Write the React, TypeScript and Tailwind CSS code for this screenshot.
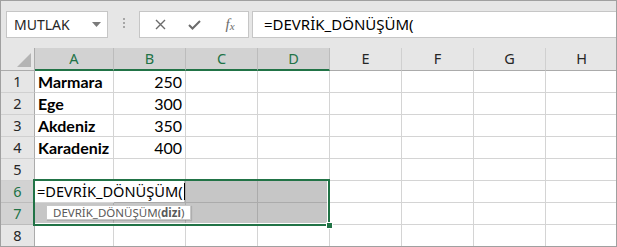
const ui = "font-['Noto_Sans','Open_Sans',sans-serif]";
const cellFont = "font-['Lato','Liberation_Sans',sans-serif]";

const cols = ['A', 'B', 'C', 'D', 'E', 'F', 'G', 'H'];
const widths = ['w-[79px]', 'w-[72px]', 'w-[72px]', 'w-[72px]', 'w-[72px]', 'w-[72px]', 'w-[72px]', 'w-[72px]'];

const data: Record<number, [string, string]> = {
  1: ['Marmara', '250'],
  2: ['Ege', '300'],
  3: ['Akdeniz', '350'],
  4: ['Karadeniz', '400'],
};

function HeaderRow() {
  return (
    <div className="flex h-[23px] shrink-0">
      <div className="relative w-[34px] shrink-0 border-r border-b border-[#ababab] bg-[#e6e6e6]">
        <svg className="absolute right-[3px] bottom-[3px]" width="14" height="14" viewBox="0 0 14 14">
          <polygon points="14,0 14,14 0,14" fill="#b4b4b4" />
        </svg>
      </div>
      {cols.map((c, i) => {
        const sel = i < 4;
        return (
          <div
            key={c}
            className={`${widths[i]} shrink-0 flex items-center justify-center text-[14.5px] ${
              sel
                ? 'bg-[#d2d2d2] text-[#217346] border-b-2 border-b-[#217346] border-r border-r-[#bcbcbc]'
                : 'bg-[#e6e6e6] text-[#262626] border-b border-b-[#ababab] border-r border-r-[#d0d0d0]'
            } ${i === 3 ? 'border-r-[#ababab]' : ''}`}
          >
            {c}
          </div>
        );
      })}
    </div>
  );
}

function Row({ n }: { n: number }) {
  const selRow = n === 6 || n === 7;
  const d = data[n];
  return (
    <div className="flex h-[22px] shrink-0">
      <div
        className={`w-[34px] shrink-0 flex items-center justify-center text-[14.5px] border-b border-r ${
          selRow
            ? 'bg-[#d2d2d2] text-[#217346] border-b-[#bcbcbc] border-r-[#217346]'
            : 'bg-[#e6e6e6] text-[#262626] border-b-[#d0d0d0] border-r-[#ababab]'
        }`}
      >
        {n}
      </div>
      {cols.map((c, i) => {
        const gray = selRow && i < 4 && !(n === 6 && i === 0);
        return (
          <div
            key={c}
            className={`${widths[i]} shrink-0 flex items-center px-[3px] text-[16px] text-black ${cellFont} border-b border-r ${
              gray ? 'bg-[#c6c6c6] border-[#ababab]' : 'bg-white border-[#d4d4d4]'
            } ${i === 1 ? 'justify-end' : ''}`}
          >
            {d && i === 0 && <span className="font-bold">{d[0]}</span>}
            {d && i === 1 && <span>{d[1]}</span>}
          </div>
        );
      })}
    </div>
  );
}

export default function App() {
  return (
    <div className={`relative flex h-[247px] w-[617px] flex-col overflow-hidden border border-[#a0a0a0] bg-[#e6e6e6] ${ui}`}>
      <div className="flex h-[47px] shrink-0 items-start pt-[10px] pl-[5px]">
        <div className="flex h-[27px] w-[102px] items-center justify-between border border-[#c6c6c6] bg-white pl-[7px] pr-[6px] text-[14px] text-[#262626]">
          <span>MUTLAK</span>
          <svg width="9" height="5" viewBox="0 0 9 5">
            <polygon points="0,0 9,0 4.5,5" fill="#7a7a7a" />
          </svg>
        </div>
        <div className="flex w-[31px] flex-col items-center gap-[2px] pt-[7px]">
          <span className="h-[2px] w-[2px] bg-[#a6a6a6]" />
          <span className="h-[2px] w-[2px] bg-[#a6a6a6]" />
          <span className="h-[2px] w-[2px] bg-[#a6a6a6]" />
        </div>
        <div className="flex h-[27px] w-[110px] items-center border border-[#c6c6c6] bg-white">
          <div className="flex w-[36px] justify-center pl-[4px]">
            <svg width="11" height="11" viewBox="0 0 11 11">
              <path d="M1 1 L10 10 M10 1 L1 10" stroke="#6b6b6b" strokeWidth="1.4" />
            </svg>
          </div>
          <div className="flex w-[36px] justify-center">
            <svg width="13" height="10" viewBox="0 0 13 10">
              <path d="M1 5 L4.5 8.5 L12 1" stroke="#6b6b6b" strokeWidth="2" fill="none" />
            </svg>
          </div>
          <div className="flex w-[36px] items-end justify-center font-['Liberation_Serif',serif] italic text-[#6b6b6b]">
            <span className="text-[15px] leading-none">f</span>
            <span className="text-[11px] leading-none">x</span>
          </div>
        </div>
        <div className="ml-[3px] flex h-[27px] flex-1 items-center border border-[#c6c6c6] border-r-0 bg-white pl-[11px] text-[15px] text-black">
          =DEVRİK_DÖNÜŞÜM(
        </div>
      </div>
      <div className="relative flex-1 overflow-hidden">
        <HeaderRow />
        {[1, 2, 3, 4, 5, 6, 7, 8].map((n) => (
          <Row key={n} n={n} />
        ))}
        <div className="absolute left-[32px] top-[131px] h-[47px] w-[297px] border-2 border-[#217346]">
          <div className="h-full w-full border border-white border-l-0 border-t-0" />
        </div>
        <div className="absolute left-[34px] top-[133px] flex h-[21px] w-[149px] items-center bg-white pl-[2px] text-[14.6px] text-black">
          =DEVRİK_DÖNÜŞÜM(
          <span className="ml-[1px] h-[17px] w-[1px] bg-black" />
        </div>
        <div className="absolute left-[325px] top-[174px] h-[7px] w-[7px] border border-white bg-[#217346]" />
        <div className="absolute left-[45px] top-[157px] flex h-[15px] items-center border border-[#c8c8c8] bg-white px-[6px] text-[11.5px] leading-none text-[#595959] shadow-[1px_1px_1px_rgba(0,0,0,0.12)]">
          DEVRİK_DÖNÜŞÜM(<span className="font-bold">dizi</span>)
        </div>
      </div>
    </div>
  );
}
